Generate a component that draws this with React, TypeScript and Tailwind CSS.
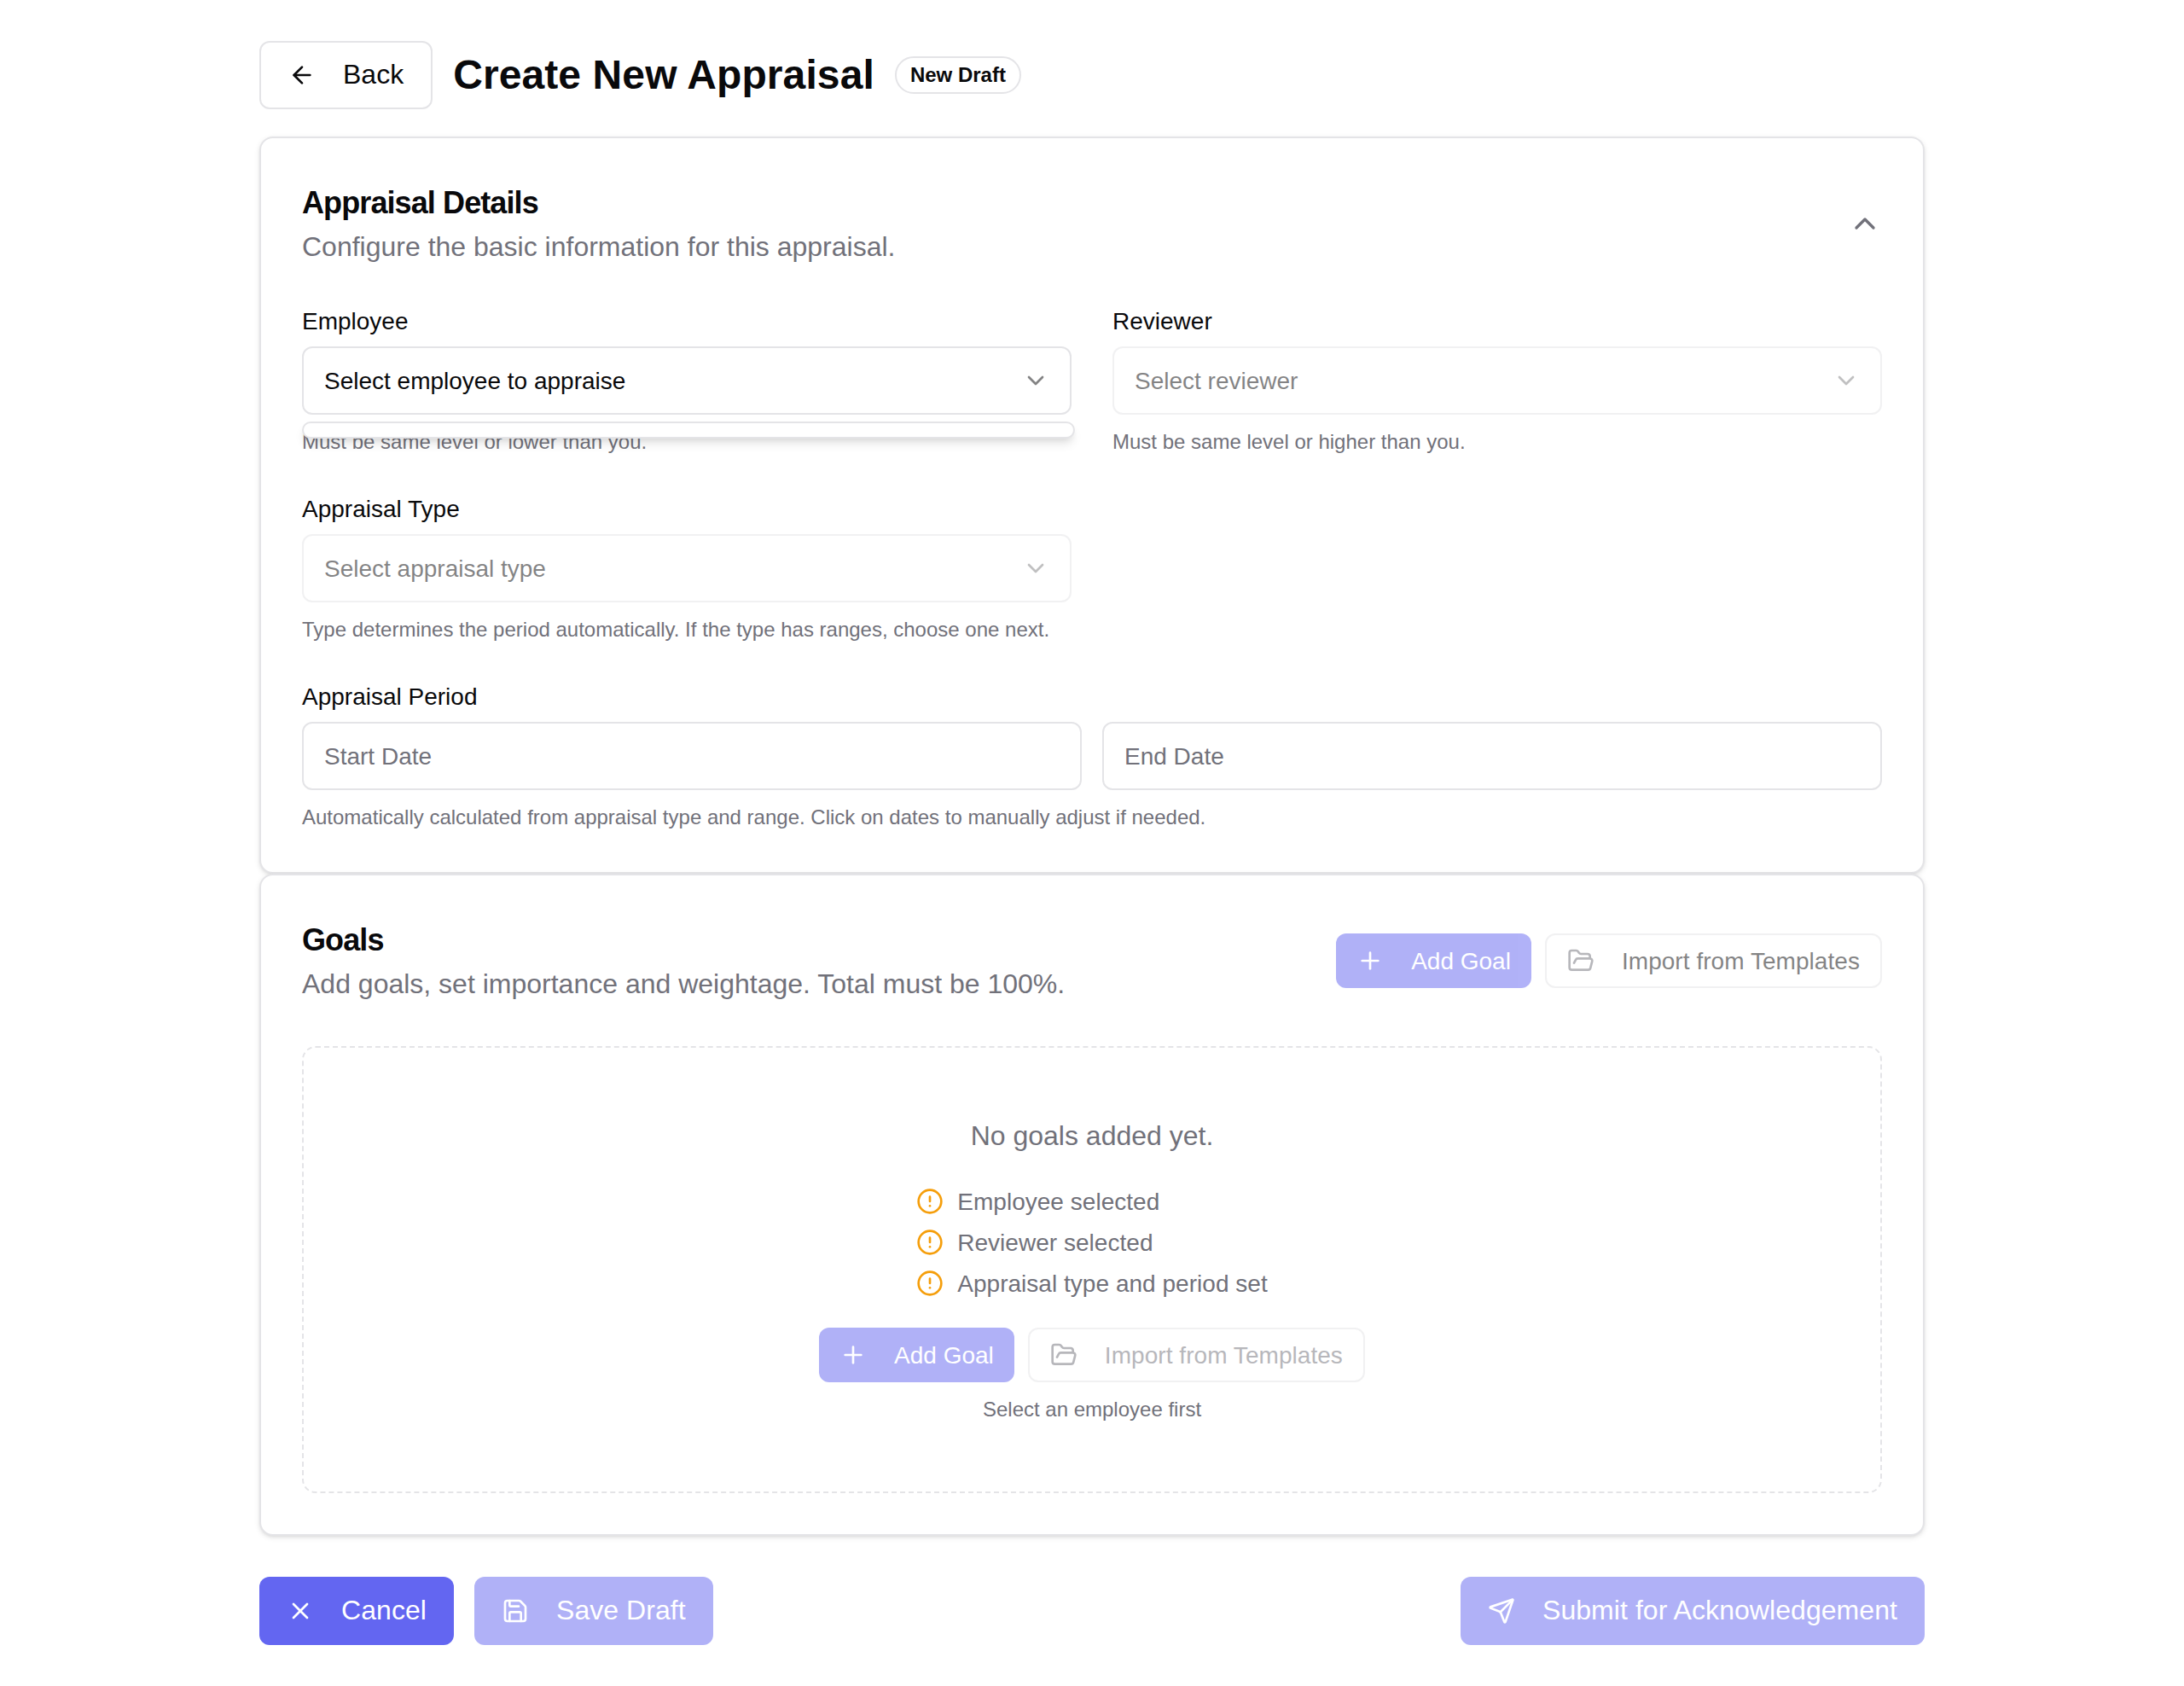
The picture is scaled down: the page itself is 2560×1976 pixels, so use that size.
import type { ReactNode } from "react";
import { ArrowLeft, ChevronDown, ChevronUp, CircleAlert, FolderOpen, Plus, Save, Send, X } from "lucide-react";

const requirements = ["Employee selected", "Reviewer selected", "Appraisal type and period set"];

function Card({ children }: { children: ReactNode }) {
  return (
    <section className="rounded-[16px] border-2 border-[#e4e4e7] bg-white p-12 shadow-[0_2px_6px_0_rgba(0,0,0,0.1),0_2px_4px_-2px_rgba(0,0,0,0.1)]">
      {children}
    </section>
  );
}

function CardHeader({ title, description, children }: { title: string; description: string; children: ReactNode }) {
  return (
    <div className="flex items-center justify-between">
      <div>
        <h2 className="text-[36px] leading-[56px] font-semibold tracking-[-0.9px]">{title}</h2>
        <p className="h-12 text-[32px] leading-[46px] text-[#71717a]">{description}</p>
      </div>
      {children}
    </div>
  );
}

function Field({ label, hint, children }: { label: string; hint: string; children: ReactNode }) {
  return (
    <div className="relative flex flex-col gap-4">
      <label className="h-7 text-[28px] leading-[30px]">{label}</label>
      {children}
      <p className="text-[24px] leading-[32px] text-[#71717a]">{hint}</p>
    </div>
  );
}

function SelectBox({ text, disabled = false }: { text: string; disabled?: boolean }) {
  return (
    <button
      disabled={disabled}
      className="flex h-20 items-center justify-between rounded-[12px] border-2 border-[#e4e4e7] bg-white px-6 text-[28px] leading-[40px] disabled:opacity-50"
    >
      <span className="pt-0.5">{text}</span>
      <ChevronDown size={32} className="opacity-50" />
    </button>
  );
}

function DateInput({ text }: { text: string }) {
  return (
    <button className="flex h-20 items-center rounded-[12px] border-2 border-[#e4e4e7] bg-white px-6 text-[28px] leading-[40px] text-[#71717a]">
      <span className="pt-0.5">{text}</span>
    </button>
  );
}

function GoalActions({ muted = false }: { muted?: boolean }) {
  return (
    <div className="flex gap-4">
      <button
        disabled
        className="flex h-16 items-center gap-8 rounded-[12px] bg-[#6366f1] px-6 text-[28px] leading-[40px] text-white opacity-50"
      >
        <Plus size={32} />
        <span className="pt-0.5">Add Goal</span>
      </button>
      <button
        disabled
        className="flex h-16 items-center gap-8 rounded-[12px] border-2 border-[#e4e4e7] bg-white px-6 text-[28px] leading-[40px] opacity-50"
      >
        <FolderOpen size={32} className="text-[#71717a]" />
        <span className={muted ? "pt-0.5 tracking-[0.05px] text-[#71717a]" : "pt-0.5 tracking-[0.05px] text-[#09090b]"}>
          Import from Templates
        </span>
      </button>
    </div>
  );
}

function FooterButton({ icon, text, disabled = false }: { icon: ReactNode; text: string; disabled?: boolean }) {
  return (
    <button
      disabled={disabled}
      className="flex h-20 items-center gap-8 rounded-[12px] bg-[#6366f1] px-8 text-[32px] leading-[48px] text-white disabled:opacity-50"
    >
      {icon}
      <span className="pb-0.5 tracking-[0.06px]">{text}</span>
    </button>
  );
}

export default function App() {
  return (
    <main className="min-h-[1976px] bg-white px-[304px] py-12 font-['Liberation_Sans',Arial,sans-serif] text-[#09090b]">
      <header className="mb-8 flex items-center gap-6">
        <button className="flex h-20 items-center gap-8 rounded-[12px] border-2 border-[#e4e4e7] bg-white px-8 text-[32px] leading-[48px]">
          <ArrowLeft size={32} />
          <span className="pb-0.5">Back</span>
        </button>
        <h1 className="text-[48px] leading-[64px] font-bold tracking-[0.1px]">Create New Appraisal</h1>
        <span className="rounded-full border-2 border-[#e4e4e7] px-4 py-1 text-[24px] leading-[32px] font-semibold">
          New Draft
        </span>
      </header>

      <Card>
        <CardHeader title="Appraisal Details" description="Configure the basic information for this appraisal.">
          <ChevronUp size={40} className="text-[#71717a]" />
        </CardHeader>
        <div className="mt-12 grid grid-cols-2 gap-12">
          <Field label="Employee" hint="Must be same level or lower than you.">
            <SelectBox text="Select employee to appraise" />
            <div className="absolute top-[132px] left-0 h-5 w-[906px] rounded-[12px] border-2 border-[#e4e4e7] bg-white shadow-[0_8px_12px_-2px_rgba(0,0,0,0.1),0_4px_8px_-4px_rgba(0,0,0,0.1)]" />
          </Field>
          <Field label="Reviewer" hint="Must be same level or higher than you.">
            <SelectBox text="Select reviewer" disabled />
          </Field>
          <Field
            label="Appraisal Type"
            hint="Type determines the period automatically. If the type has ranges, choose one next."
          >
            <SelectBox text="Select appraisal type" disabled />
          </Field>
          <div className="col-span-2">
            <Field
              label="Appraisal Period"
              hint="Automatically calculated from appraisal type and range. Click on dates to manually adjust if needed."
            >
              <div className="grid grid-cols-2 gap-6">
                <DateInput text="Start Date" />
                <DateInput text="End Date" />
              </div>
            </Field>
          </div>
        </div>
      </Card>

      <Card>
        <CardHeader title="Goals" description="Add goals, set importance and weightage. Total must be 100%.">
          <GoalActions />
        </CardHeader>
        <div className="mt-12 flex flex-col items-center rounded-[16px] border-2 border-dashed border-[#e4e4e7] py-20 text-[#71717a]">
          <p className="h-12 text-[32px] leading-[46px]">No goals added yet.</p>
          <ul className="my-8 flex flex-col gap-2 text-[28px] leading-[40px]">
            {requirements.map((item) => (
              <li key={item} className="flex h-10 items-center gap-4">
                <CircleAlert size={32} className="text-[#f59e0b]" />
                <span className="pt-0.5 tracking-[0.03px]">{item}</span>
              </li>
            ))}
          </ul>
          <GoalActions muted />
          <p className="mt-4 text-[24px] leading-[32px]">Select an employee first</p>
        </div>
      </Card>

      <footer className="mt-12 flex items-center justify-between">
        <div className="flex gap-6">
          <FooterButton icon={<X size={32} />} text="Cancel" />
          <FooterButton icon={<Save size={32} />} text="Save Draft" disabled />
        </div>
        <FooterButton icon={<Send size={32} />} text="Submit for Acknowledgement" disabled />
      </footer>
    </main>
  );
}
